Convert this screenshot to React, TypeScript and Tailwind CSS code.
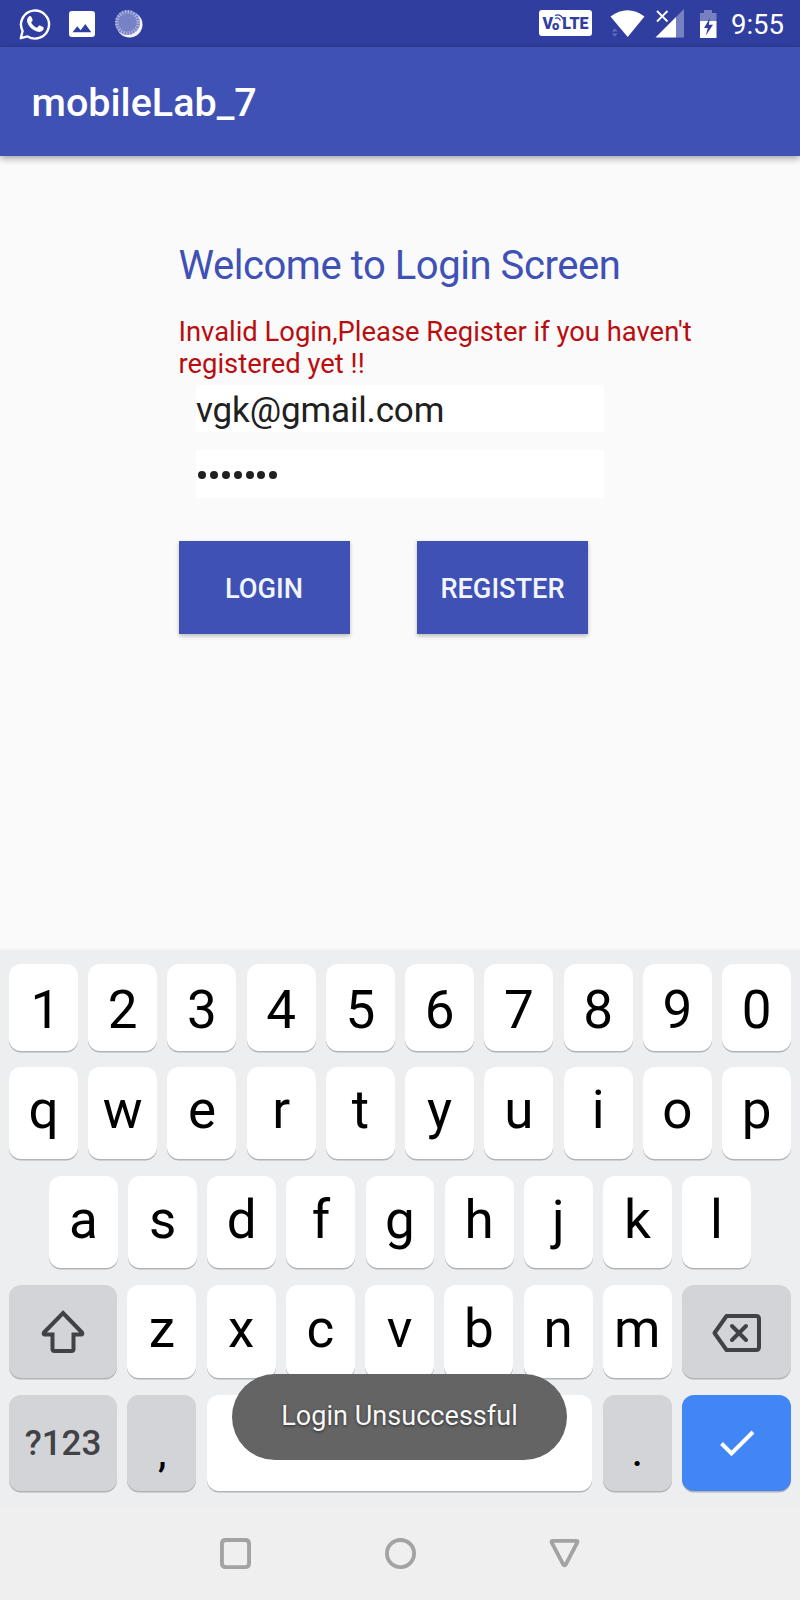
import type { ReactNode } from "react";

function WhatsAppIcon() {
  return (
    <svg className="h-8 w-8" viewBox="0 0 32 32" fill="none">
      <path d="M1.8 30.2 3.600 23A14 14 0 1 1 8.600 28.400Z" stroke="#fff" strokeWidth="2.400" strokeLinejoin="round" />
      <path d="M9.9 8.4c.5-.5 1.9-.6 2.3.2l1.4 3.2c.2.5-.1 1-.5 1.5l-1 1.2c1.4 2.5 3.3 4.3 6 5.3l1.5-1.8c.4-.5.8-.6 1.3-.4l3.2 1.5c.8.4.6 1.5.3 2.3-.8 1.9-3.3 2.8-5.1 2.4-5.8-1.3-10-5.400-11.200-10.300-.4-1.900.5-3.900 1.800-5.100Z" fill="#fff" />
    </svg>
  );
}

function GalleryIcon() {
  return (
    <svg className="h-[26px] w-[26px]" viewBox="0 0 26 26">
      <path fillRule="evenodd" fill="#fff" d="M3 0h20a3 3 0 0 1 3 3v20a3 3 0 0 1-3 3H3a3 3 0 0 1-3-3V3a3 3 0 0 1 3-3Zm.5 21.300H22.300L16.300 13.100 11.600 19.200 8.300 15.200Z" />
    </svg>
  );
}

function SpinnerIcon() {
  return (
    <svg className="h-7 w-7" viewBox="0 0 28 28" fill="none">
      <circle cx="14.500" cy="14.600" r="13" fill="#f5f6ff" />
      <circle cx="12.500" cy="12.500" r="12.500" fill="#7781c6" />
      <circle cx="12.500" cy="12.500" r="10.700" stroke="#b3b9e5" strokeWidth="3.500" strokeDasharray="1.200 1.601" />
    </svg>
  );
}

function StatusBar() {
  return (
    <div className="flex h-[47px] shrink-0 items-center bg-[#303f9f] pl-[19px] pr-4 text-white">
      <WhatsAppIcon />
      <div className="ml-[18px]"><GalleryIcon /></div>
      <div className="ml-5"><SpinnerIcon /></div>
      <div className="-mt-px ml-auto flex h-[26px] w-[53px] items-center justify-center rounded-[3px] bg-white pt-[2px] text-[16px] font-black leading-none text-[#303f9f]">
        <span>V</span>
        <span className="relative -ml-px pt-[2px] text-[13px]">
          o
          <svg className="absolute -top-[4px] left-[2px] h-2 w-[11px]" viewBox="0 0 11 8" fill="none" stroke="#303f9f" strokeWidth="1.300">
            <path d="M1 2.500Q6 0 9.500 6.500M1 5.500Q4.500 3.700 6.500 7.500" />
          </svg>
        </span>
        <span className="ml-[3px]">LTE</span>
      </div>
      <svg className="ml-[18px] h-[29px] w-[35px]" viewBox="0 0 35 29">
        <path d="M.5 7.500Q17.500-5 34.500 7.500L17.700 28Z" fill="#fff" />
        <path d="M2 22.500 4.800 19.500 7.600 22.500ZM2 24.500h5.600L4.800 27.500Z" fill="#6671bd" />
      </svg>
      <svg className="ml-[10px] h-[29px] w-[29px]" viewBox="0 0 29 29">
        <path d="M29 0V28.500H21V8Z" fill="#7781c2" />
        <path d="M21 8V28.500H0.500Z" fill="#fff" />
        <path d="M2 2 12.500 12.500M12.500 2 2 12.500" stroke="#fff" strokeWidth="1.800" />
      </svg>
      <svg className="ml-[15px] h-[29px] w-[19px]" viewBox="0 0 19 29">
        <path d="M1 4H5V1H13V4H17.500V12H1Z" fill="#7781c2" />
        <path d="M1 12H17.500V29H1Z" fill="#fff" />
        <path d="M11 9 5 19H8.800L6.800 26.500 14 15.800H9.800Z" fill="#303f9f" />
      </svg>
      <span className="ml-[13px] pt-[3px] text-[27.500px] leading-8">9:55</span>
    </div>
  );
}

function Key({ children, className }: { children?: ReactNode; className: string }) {
  return (
    <div className={`flex min-w-0 items-center justify-center rounded-[12px] shadow-[0_1.500px_0_#b2b3b5] ${className}`}>
      {children}
    </div>
  );
}

function LetterKeys({ keys, className }: { keys: string; className: string }) {
  return keys.split("").map((k) => (
    <Key key={k} className={`flex-1 bg-white text-[53px] leading-none text-black ${k === "1" ? "indent-1" : ""} ${className}`}>{k}</Key>
  ));
}

function Keyboard() {
  return (
    <div className="relative flex h-[557px] shrink-0 flex-col bg-[#eceef0] px-[9px] pt-[14px] shadow-[0_-1px_2px_#eeeff1]">
      <div className="flex h-[87px] gap-[10.300px]"><LetterKeys keys="1234567890" className="pt-[5px]" /></div>
      <div className="mt-4 flex h-[92px] gap-[10.300px]"><LetterKeys keys="qwertyuiop" className="pb-[5px]" /></div>
      <div className="mt-[17px] flex h-[92px] gap-[10.300px] px-10"><LetterKeys keys="asdfghjkl" className="pb-[4px]" /></div>
      <div className="mt-[17px] flex h-[93px] gap-[10.300px]">
        <Key className="w-[108px] shrink-0 bg-[#d3d4d8]">
          <svg className="h-12 w-12" viewBox="0 0 48 48" fill="none">
            <path d="M24 5 43 24.500Q44 26.500 42 26.500H34.500V41Q34.500 43 32.500 43H15.500Q13.500 43 13.500 41V26.500H6Q4 26.500 5 24.500Z" stroke="#414246" strokeWidth="4" strokeLinejoin="miter" />
          </svg>
        </Key>
        <LetterKeys keys="zxcvbnm" className="pb-[4px]" />
        <Key className="w-[109px] shrink-0 bg-[#d3d4d8]">
          <svg className="mt-[3px] h-10 w-[50px]" viewBox="0 0 50 40" fill="none" stroke="#414246" strokeWidth="4">
            <path d="M2.500 20 14.500 3H44Q47 3 47 6V34Q47 37 44 37H14.500Z" strokeLinejoin="round" />
            <path d="M20 13 34 27M34 13 20 27" strokeLinecap="round" />
          </svg>
        </Key>
      </div>
      <div className="mt-[17px] flex h-24 gap-[10.300px]">
        <Key className="w-[108px] shrink-0 bg-[#d3d4d8] pt-[3px] text-[35px] font-medium text-[#414246]">?123</Key>
        <Key className="w-[69px] shrink-0 bg-[#d3d4d8] pl-px pt-[21px] text-[38px] font-medium text-black">,</Key>
        <Key className="flex-1 bg-white" />
        <Key className="w-[69px] shrink-0 bg-[#d3d4d8] pt-[21px] text-[38px] font-medium text-black">.</Key>
        <Key className="w-[109px] shrink-0 bg-[#4285f4]">
          <svg className="h-9 w-9" viewBox="0 0 36 36" fill="none">
            <path d="M2.500 18.500 12.500 28.500 34 7" stroke="#fff" strokeWidth="4" />
          </svg>
        </Key>
      </div>
      <div className="absolute left-[232px] top-[424px] flex h-[86px] w-[335px] items-center justify-center rounded-full bg-[#646464]">
        <span className="whitespace-nowrap pb-px text-[27px] tracking-[0.050px] text-[#f8f8f8] [text-shadow:0_1px_3px_rgba(0,0,0,0.600)]">Login Unsuccessful</span>
      </div>
    </div>
  );
}

export default function App() {
  return (
    <div className="flex h-[1600px] w-[800px] flex-col overflow-hidden bg-[#fafafa] font-['Roboto',sans-serif]">
      <StatusBar />
      <header className="flex h-[109px] shrink-0 items-center bg-[#3f51b5] pl-[31.500px] pt-[3px] shadow-[0_2px_7px_rgba(0,0,0,0.400)]">
        <h1 className="text-[39.500px] font-medium leading-none text-white">mobileLab_7</h1>
      </header>
      <main className="flex min-h-0 flex-1 flex-col pl-[178.500px] pt-[86px]">
        <h2 className="text-[40px] leading-[48px] tracking-[-0.450px] text-[#3f51b5]">Welcome to Login Screen</h2>
        <p className="mt-[26px] w-[530px] text-[27.400px] leading-8 text-[#b90d10]">
          Invalid Login,Please Register if you haven't registered yet !!
        </p>
        <div className="ml-[17.500px] mt-[5px] flex h-[47px] w-[408px] items-center bg-white pt-[3px] text-[35px] leading-none tracking-[-0.150px] text-[#202020]">
          vgk@gmail.com
        </div>
        <div className="ml-[17.500px] mt-[18px] flex h-12 w-[408px] items-center gap-[3.900px] bg-white pl-[2px] pt-[2px]">
          {[0, 1, 2, 3, 4, 5, 6].map((i) => (
            <span key={i} className="h-2 w-2 rounded-full bg-[#202020]" />
          ))}
        </div>
        <div className="mt-[43px] flex gap-[67.500px] text-[27.200px] font-medium text-[#f0f5ff]">
          <div className="flex h-[93px] w-[171px] items-center justify-center bg-[#3f51b5] pt-[3px] shadow-[0_2px_4px_rgba(0,0,0,0.250)]">LOGIN</div>
          <div className="flex h-[93px] w-[171px] items-center justify-center bg-[#3f51b5] pt-[3px] shadow-[0_2px_4px_rgba(0,0,0,0.250)]">REGISTER</div>
        </div>
      </main>
      <Keyboard />
      <nav className="flex h-[93px] shrink-0 items-center justify-center gap-[133.500px] bg-[#efefef]">
        {["M6 2H26Q30 2 30 6V26Q30 30 26 30H6Q2 30 2 26V6Q2 2 6 2Z", "M2 16A14 14 0 1 0 30 16A14 14 0 1 0 2 16Z", "M3.500 3H28.500Q30 3 29 5L17.500 27Q16 29.500 14.500 27L3 5Q2 3 3.500 3Z"].map((d) => (
          <svg key={d} className="h-[31px] w-[31px]" viewBox="0 0 32 32" fill="none" stroke="#a3a3a3" strokeWidth="4">
            <path d={d} />
          </svg>
        ))}
      </nav>
    </div>
  );
}
